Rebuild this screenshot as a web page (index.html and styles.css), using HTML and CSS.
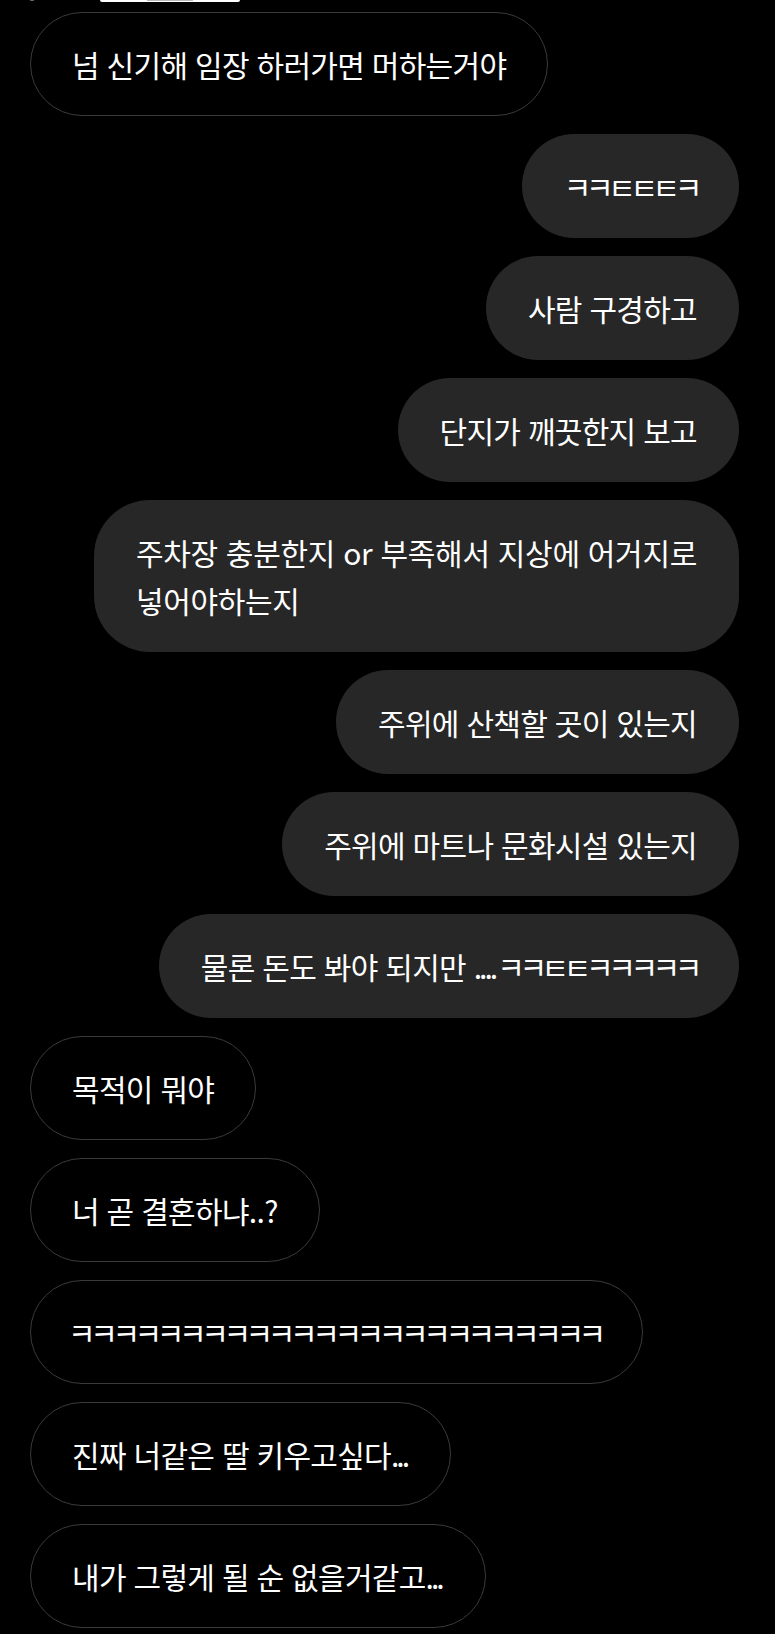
FILE: index.html
```html
<!DOCTYPE html>
<html lang="ko">
<head>
<meta charset="utf-8">
<title>Chat</title>
<link rel="stylesheet" href="styles.css">
</head>
<body>
<div class="peek-row">
  <span class="peek-dot"></span>
  <span class="peek-card"><span class="peek-text"></span></span>
</div>
<main class="thread">
  <div class="msg in"><div class="bubble">넘 신기해 임장 하러가면 머하는거야</div></div>
  <div class="msg out"><div class="bubble"><span class="jamo">ㅋㅋㅌㅌㅌㅋ</span></div></div>
  <div class="msg out"><div class="bubble">사람 구경하고</div></div>
  <div class="msg out"><div class="bubble">단지가 깨끗한지 보고</div></div>
  <div class="msg out"><div class="bubble multi">주차장 충분한지 or 부족해서 지상에 어거지로<br>넣어야하는지</div></div>
  <div class="msg out"><div class="bubble">주위에 산책할 곳이 있는지</div></div>
  <div class="msg out"><div class="bubble">주위에 마트나 문화시설 있는지</div></div>
  <div class="msg out"><div class="bubble">물론 돈도 봐야 되지만 <span class="dots">....</span><span class="jamo">ㅋㅋㅌㅌㅋㅋㅋㅋㅋ</span></div></div>
  <div class="msg in"><div class="bubble">목적이 뭐야</div></div>
  <div class="msg in"><div class="bubble">너 곧 결혼하냐..?</div></div>
  <div class="msg in"><div class="bubble"><span class="jamo lead">ㅋㅋㅋㅋㅋㅋㅋㅋㅋㅋㅋㅋㅋㅋㅋㅋㅋㅋㅋㅋㅋㅋㅋㅋ</span></div></div>
  <div class="msg in"><div class="bubble">진짜 너같은 딸 키우고싶다<span class="dots">...</span></div></div>
  <div class="msg in"><div class="bubble">내가 그렇게 될 순 없을거같고<span class="dots">...</span></div></div>
</main>
</body>
</html>
```
FILE: styles.css
```css
html, body {
  margin: 0;
  padding: 0;
  background: #000;
}
body {
  font-family: "Noto Sans CJK KR", "Noto Sans", sans-serif;
  color: #fff;
  width: 775px;
  height: 1634px;
  overflow: hidden;
}
.peek-row {
  height: 3px;
  display: flex;
  align-items: flex-start;
  padding-left: 30px;
}
.peek-dot {
  width: 4px;
  height: 1px;
  background: #666;
  border-radius: 1px;
}
.peek-card {
  margin-left: 66px;
  width: 140px;
  height: 2px;
  background: #fff;
  border-radius: 0 0 6px 6px;
  display: flex;
  justify-content: center;
}
.peek-text {
  width: 46px;
  height: 1px;
  background: #bbb;
}
.thread {
  display: flex;
  flex-direction: column;
  gap: 18px;
  padding: 9px 36px 0 30px;
}
.msg {
  display: flex;
}
.msg.out {
  justify-content: flex-end;
}
.msg.in {
  justify-content: flex-start;
}
.bubble {
  font-size: 30px;
  line-height: 48px;
  letter-spacing: -0.7px;
  padding: 28px 42px;
  border-radius: 52px;
  white-space: nowrap;
  box-sizing: border-box;
}
.msg.in .bubble {
  background: #000;
  border: 1px solid #3a3a3a;
  padding: 27px 41px;
}
.msg.out .bubble {
  background: #272727;
}
.bubble.multi {
  border-radius: 56px;
  letter-spacing: -0.3px;
}
.jamo {
  letter-spacing: -5.4px;
}
.jamo.lead {
  margin-left: -4px;
}
.dots {
  letter-spacing: -3px;
  margin-right: 2px;
}
```
